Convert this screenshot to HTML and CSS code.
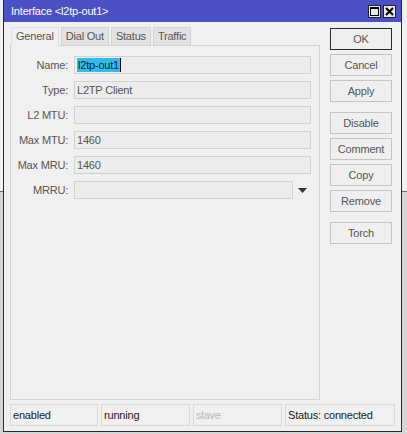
FILE: index.html
```html
<!DOCTYPE html>
<html lang="en">
<head>
  <meta charset="UTF-8">
  <title>Interface &lt;l2tp-out1&gt;</title>
  <link rel="stylesheet" href="styles.css">
</head>
<body>
  <div class="window">
    <div class="titlebar">
      <span class="title">Interface &lt;l2tp-out1&gt;</span>
      <div class="title-buttons">
        <span class="tbtn">
          <svg width="9" height="9" viewBox="0 0 9 9"><rect x="0.5" y="0.5" width="8" height="8" fill="none" stroke="#000"/><rect x="0" y="0" width="9" height="2" fill="#000"/></svg>
        </span>
        <span class="tbtn">
          <svg width="9" height="9" viewBox="0 0 9 9"><path d="M1 1 L8 8 M8 1 L1 8" stroke="#000" stroke-width="2"/></svg>
        </span>
      </div>
    </div>

    <div class="content">
      <div class="main">
        <div class="left">
          <div class="tabs">
            <div class="tab active">General</div>
            <div class="tab">Dial Out</div>
            <div class="tab">Status</div>
            <div class="tab">Traffic</div>
          </div>
          <div class="panel">
            <div class="row">
              <label>Name:</label>
              <div class="field"><span class="sel">l2tp-out1</span><span class="caret"></span></div>
            </div>
            <div class="row">
              <label>Type:</label>
              <div class="field">L2TP Client</div>
            </div>
            <div class="row">
              <label>L2 MTU:</label>
              <div class="field"></div>
            </div>
            <div class="row">
              <label>Max MTU:</label>
              <div class="field">1460</div>
            </div>
            <div class="row">
              <label>Max MRU:</label>
              <div class="field">1460</div>
            </div>
            <div class="row">
              <label>MRRU:</label>
              <div class="field short"></div>
              <svg class="drop" width="9" height="5" viewBox="0 0 9 5"><path d="M0 0 H9 L4.5 5 Z" fill="#333"/></svg>
            </div>
          </div>
        </div>

        <div class="buttons">
          <div class="btn default">OK</div>
          <div class="btn">Cancel</div>
          <div class="btn">Apply</div>
          <div class="btn spaced">Disable</div>
          <div class="btn">Comment</div>
          <div class="btn">Copy</div>
          <div class="btn">Remove</div>
          <div class="btn spaced">Torch</div>
        </div>
      </div>

      <div class="statusbar">
        <div class="cell c1">enabled</div>
        <div class="cell c2">running</div>
        <div class="cell c3 dim">slave</div>
        <div class="cell c4">Status: connected</div>
      </div>
    </div>
  </div>
</body>
</html>
```

FILE: styles.css
```css
* {
  box-sizing: border-box;
}
body {
  margin: 0;
  font-family: "Liberation Sans", Arial, sans-serif;
  font-size: 11px;
  letter-spacing: -0.2px;
  background: linear-gradient(to bottom, #f0f0f0 191px, #6a6a6a 191px, #6a6a6a 192px, #d6d6d6 192px);
  height: 434px;
  overflow: hidden;
}
.window {
  margin-left: 3px;
  width: 399px;
  height: 432px;
  border: 1px solid #2b2b2b;
  border-top: none;
  background: #f0f0f0;
  display: flex;
  flex-direction: column;
}
.titlebar {
  height: 22px;
  background: #4b50c5;
  color: #fff;
  display: flex;
  align-items: center;
  justify-content: space-between;
  padding: 0 5px 0 7px;
}
.title-buttons {
  display: flex;
  gap: 2px;
}
.tbtn {
  width: 13px;
  height: 13px;
  background: #e8e8e8;
  border: 1px solid #222;
  display: flex;
  align-items: center;
  justify-content: center;
}
.content {
  padding: 5px 6px 0 6px;
  display: flex;
  flex-direction: column;
}
.main {
  display: flex;
  gap: 10px;
}
.left {
  width: 310px;
}
.tabs {
  display: flex;
  gap: 2px;
  padding-left: 1px;
  height: 18px;
  position: relative;
  z-index: 1;
}
.tab {
  height: 18px;
  line-height: 17px;
  padding: 0 4px;
  border: 1px solid #d4d4d4;
  border-bottom: none;
  background: #e2e2e2;
  color: #555;
}
.tab.active {
  background: #f0f0f0;
  height: 19px;
  border-color: #e0e0e0;
}
.panel {
  height: 355px;
  border: 1px solid #d4d4d4;
  padding: 10px 8px 0 0;
  display: flex;
  flex-direction: column;
  gap: 7px;
}
.row {
  display: flex;
  align-items: center;
  height: 18px;
}
.row label {
  width: 57px;
  text-align: right;
  color: #555;
  margin-right: 6px;
}
.field {
  flex: 1;
  height: 18px;
  border: 1px solid #d2d2d2;
  background: #ececec;
  color: #555;
  line-height: 16px;
  padding-left: 2px;
  display: flex;
  align-items: center;
}
.field.short {
  flex: none;
  width: 219px;
}
.drop {
  margin-left: 5px;
}
.sel {
  background: #2fbdec;
  color: #0b1d3a;
  padding: 0 1px;
  line-height: 14px;
}
.caret {
  width: 1px;
  height: 14px;
  background: #000;
}
.buttons {
  width: 62px;
  display: flex;
  flex-direction: column;
  gap: 4px;
  padding-top: 1px;
}
.btn {
  height: 22px;
  border: 1px solid #c4c4c4;
  background: #efefef;
  color: #555;
  text-align: center;
  line-height: 20px;
}
.btn.default {
  border-color: #2a2a2a;
}
.btn.spaced {
  margin-top: 6px;
}
.statusbar {
  display: flex;
  gap: 3px;
  margin-top: 4px;
}
.cell {
  height: 22px;
  border: 1px solid #d8d8d8;
  line-height: 20px;
  padding-left: 2px;
  color: #222;
}
.c1 { width: 88px; }
.c2 { width: 89px; }
.c3 { width: 89px; }
.c4 { width: 110px; }
.dim {
  color: #b8b8b8;
}
```
